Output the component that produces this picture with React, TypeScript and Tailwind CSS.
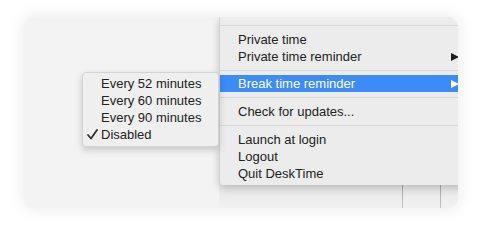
import React from 'react';

const font = { fontFamily: '"Liberation Sans", Arial, sans-serif' };

const Separator: React.FC<{ h: string }> = ({ h }) => (
  <div className={`${h} flex flex-col justify-center`}>
    <div className="h-px bg-[#d8d8d8]" />
  </div>
);

const MenuItem: React.FC<{ label: string; arrow?: boolean; active?: boolean }> = ({ label, arrow, active }) => (
  <div
    className={`h-[17px] leading-[17px] pl-[18px] pr-[4px] flex items-center justify-between ${
      active ? 'bg-[#3d8bf7] text-white' : 'text-[#222]'
    }`}
  >
    <span>{label}</span>
    {arrow && (
      <svg width="9" height="10" viewBox="0 0 9 10" className="shrink-0">
        <path d="M0 1 L8 5 L0 9 Z" fill={active ? '#ffffff' : '#1a1a1a'} />
      </svg>
    )}
  </div>
);

const subItems = ['Every 52 minutes', 'Every 60 minutes', 'Every 90 minutes', 'Disabled'];

const App: React.FC = () => {
  return (
    <div className="w-[482px] h-[238px] bg-white pt-[17px] pl-[24px]" style={font}>
      <div className="relative w-[434px] h-[191px] rounded-[10px] bg-[#f3f3f3] overflow-hidden shadow-[0_0_14px_4px_rgba(0,0,0,0.06)] text-[13px]">
        {/* window underneath */}
        <div className="flex flex-col h-full">
          <div className="h-[168px]" />
          <div className="flex-1 flex">
            <div className="w-[195px]" />
            <div className="flex-1 flex bg-gradient-to-b from-[#e8e8e8] to-[#f1f1f1]">
              <div className="w-[183px]" />
              <div className="w-px bg-gradient-to-b from-[#a8a8a8] to-[#c4c4c4]" />
              <div className="w-[37px]" />
              <div className="w-px bg-gradient-to-b from-[#a8a8a8] to-[#c4c4c4]" />
            </div>
          </div>
        </div>

        {/* main menu */}
        <div className="absolute left-[195px] top-0 w-[245px] bg-[#ececec] border-l border-[#d2d2d2] rounded-bl-[4px] shadow-[0_3px_8px_rgba(0,0,0,0.2)] pb-[3px]">
          <div className="h-[8px]" />
          <div className="h-px bg-[#d8d8d8]" />
          <div className="h-[5px]" />
          <MenuItem label="Private time" />
          <MenuItem label="Private time reminder" arrow />
          <Separator h="h-[10px]" />
          <MenuItem label="Break time reminder" arrow active />
          <Separator h="h-[11px]" />
          <MenuItem label="Check for updates..." />
          <Separator h="h-[11px]" />
          <MenuItem label="Launch at login" />
          <MenuItem label="Logout" />
          <MenuItem label="Quit DeskTime" />
        </div>

        {/* submenu */}
        <div className="absolute left-[58px] top-[55px] w-[137px] rounded-[4px] bg-[#efefef] border border-[#d4d4d4] shadow-[0_3px_7px_rgba(0,0,0,0.18)] pt-[2px] pb-[3px]">
          {subItems.map((s) => (
            <div key={s} className="relative h-[17px] leading-[17px] pl-[18px] text-[#222]">
              {s === 'Disabled' && (
                <svg width="11" height="11" viewBox="0 0 11 11" className="absolute left-[4px] top-[3px]">
                  <path d="M1 6 L4 9.5 L10 1" fill="none" stroke="#2a2a2a" strokeWidth="1.7" strokeLinecap="round" strokeLinejoin="round" />
                </svg>
              )}
              {s}
            </div>
          ))}
        </div>
      </div>
    </div>
  );
};

export default App;
